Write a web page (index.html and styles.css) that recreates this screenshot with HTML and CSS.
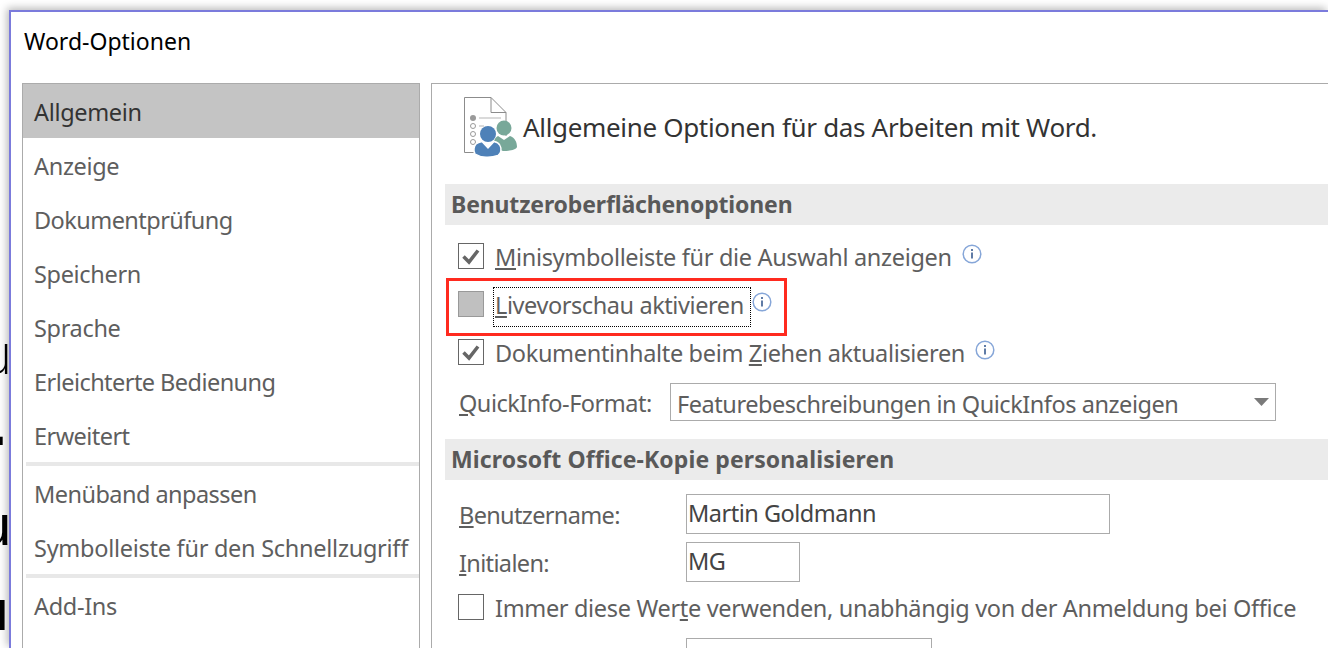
FILE: index.html
```html
<!DOCTYPE html>
<html lang="de">
<head>
<meta charset="utf-8">
<title>Word-Optionen</title>
<link rel="stylesheet" href="styles.css">
</head>
<body>
<div class="backdrop" aria-hidden="true">
  <span class="frag frag-1">u</span>
  <span class="frag frag-2">.</span>
  <span class="frag frag-3">u</span>
  <span class="frag frag-4">ı</span>
</div>
<div class="window">
  <header class="title">Word-Optionen</header>
  <div class="columns">
    <nav class="sidebar">
      <div class="nav-item selected">Allgemein</div>
      <div class="nav-item">Anzeige</div>
      <div class="nav-item narrow">Dokumentprüfung</div>
      <div class="nav-item">Speichern</div>
      <div class="nav-item">Sprache</div>
      <div class="nav-item narrow">Erleichterte Bedienung</div>
      <div class="nav-item narrow">Erweitert</div>
      <div class="nav-sep"></div>
      <div class="nav-item narrow">Menüband anpassen</div>
      <div class="nav-item roomy">Symbolleiste für den Schnellzugriff</div>
      <div class="nav-sep"></div>
      <div class="nav-item">Add-Ins</div>
    </nav>
    <main class="panel">
      <div class="heading">
        <svg class="heading-icon" width="60" height="64" viewBox="0 0 60 64">
          <path d="M1.500 1.500H28L43 16.500V40M1.500 1.500V56.500H12" fill="#fff" stroke="#8c8c8c" stroke-width="1"/>
          <path d="M28 1.500V16.500H43" fill="none" stroke="#8c8c8c" stroke-width="1"/>
          <circle cx="10" cy="22" r="3" fill="#9a9a9a"/>
          <path d="M16 22H38" stroke="#b5b5b5" stroke-width="1"/>
          <circle cx="10" cy="30" r="2.500" fill="#fff" stroke="#9a9a9a"/>
          <path d="M16 30H21" stroke="#b5b5b5" stroke-width="1"/>
          <circle cx="10" cy="38" r="2.500" fill="#fff" stroke="#9a9a9a"/>
          <circle cx="10" cy="46" r="2.500" fill="#fff" stroke="#9a9a9a"/>
          <circle cx="41" cy="32" r="7.500" fill="#78a899"/>
          <path d="M32 52C30 46 31 42 35 40L41 44L47 40C52 42 54 46 54 51C53 54 46 55 40 55Z" fill="#78a899"/>
          <circle cx="25" cy="38" r="8" fill="#4e81b8"/>
          <path d="M12 58C10 55 11 50 13 48C15 46.500 17 46 19 45.500L25 52L31 45.500C34 46 36 47.500 37 49.500C39 53 38 58 35 59.500C28 62 18 62 12 58Z" fill="#4e81b8" stroke="#fff" stroke-width="1.500"/>
        </svg>
        <h1 class="heading-text">Allgemeine Optionen für das Arbeiten mit Word.</h1>
      </div>

      <h2 class="section sec-a">Benutzeroberflächenoptionen</h2>
      <div class="check-row first">
        <span class="box"><svg width="24" height="24" viewBox="0 0 24 24"><path d="M4.500 12.500L10 18L19 6.500" fill="none" stroke="#666" stroke-width="3.500"/></svg></span>
        <span class="label"><u>M</u>inisymbolleiste für die Auswahl anzeigen</span>
        <svg class="info" width="20" height="20" viewBox="0 0 20 20"><circle cx="10" cy="10" r="8.800" fill="none" stroke="#86a6d8" stroke-width="1.500"/><rect x="9" y="8.500" width="2" height="6" fill="#5f7ba6"/><rect x="9" y="5" width="2" height="2" fill="#5f7ba6"/></svg>
      </div>
      <div class="check-row">
        <span class="box filled"></span>
        <span class="label focused"><u>L</u>ivevorschau aktivieren</span>
        <svg class="info tight" width="20" height="20" viewBox="0 0 20 20"><circle cx="10" cy="10" r="8.800" fill="none" stroke="#86a6d8" stroke-width="1.500"/><rect x="9" y="8.500" width="2" height="6" fill="#5f7ba6"/><rect x="9" y="5" width="2" height="2" fill="#5f7ba6"/></svg>
        <div class="callout"></div>
      </div>
      <div class="check-row">
        <span class="box"><svg width="24" height="24" viewBox="0 0 24 24"><path d="M4.500 12.500L10 18L19 6.500" fill="none" stroke="#666" stroke-width="3.500"/></svg></span>
        <span class="label">Dokumentinhalte beim <u>Z</u>iehen aktualisieren</span>
        <svg class="info" width="20" height="20" viewBox="0 0 20 20"><circle cx="10" cy="10" r="8.800" fill="none" stroke="#86a6d8" stroke-width="1.500"/><rect x="9" y="8.500" width="2" height="6" fill="#5f7ba6"/><rect x="9" y="5" width="2" height="2" fill="#5f7ba6"/></svg>
      </div>
      <div class="select-row">
        <span class="field-label"><u>Q</u>uickInfo-Format:</span>
        <div class="select">
          <span class="select-text">Featurebeschreibungen in QuickInfos anzeigen</span>
          <svg width="15" height="8" viewBox="0 0 15 8"><path d="M0 0H15L7.500 8Z" fill="#7a7a7a"/></svg>
        </div>
      </div>

      <h2 class="section sec-b">Microsoft Office-Kopie personalisieren</h2>
      <div class="input-row name">
        <span class="field-label wide"><u>B</u>enutzername:</span>
        <div class="input input-name">Martin Goldmann</div>
      </div>
      <div class="input-row initials">
        <span class="field-label wide"><u>I</u>nitialen:</span>
        <div class="input input-initials">MG</div>
      </div>
      <div class="check-row always">
        <span class="box"></span>
        <span class="label">Immer diese Wer<u>t</u>e verwenden, unabhängig von der Anmeldung bei Office</span>
      </div>
      <div class="input-row cut">
        <span class="field-label wide"></span>
        <div class="input input-cut"></div>
      </div>
    </main>
  </div>
</div>
</body>
</html>
```
FILE: styles.css
```css
* { box-sizing: border-box; }
html, body { margin: 0; height: 100%; overflow: hidden; background: #fff; }
body {
  padding: 10px 0 0 9px;
  font-family: "Noto Sans", "Open Sans", sans-serif;
  font-size: 23.500px;
  letter-spacing: -.33px;
  color: #5e5e5e;
}
.backdrop { position: absolute; left: 0; top: 0; width: 9px; height: 648px; overflow: hidden; }
.frag { position: absolute; color: #000; font-family: "Liberation Sans", sans-serif; font-size: 58px; line-height: 1; letter-spacing: 0; }
.frag-1 { left: -20px; top: 327px; font-family: "Inter", sans-serif; font-size: 55px; font-weight: 200; }
.frag-2 { left: -9px; top: 398px; font-size: 56px; font-weight: 700; }
.frag-3 { left: -21px; top: 496px; }
.frag-4 { left: -6px; top: 581px; }

.window {
  position: relative;
  height: 638px;
  border-top: 2px solid #7b7bdc;
  border-left: 2px solid #7b7bdc;
  background: #fff;
  box-shadow: -2px -2px 8px rgba(0, 0, 0, .28);
  overflow: hidden;
}
.title {
  height: 71px;
  padding: 13px 0 0 13px;
  font-size: 23px;
  letter-spacing: 0;
  line-height: 32px;
  color: #000;
}
.columns { display: flex; align-items: flex-start; padding-left: 11px; gap: 11px; }
.sidebar {
  width: 398px;
  height: 640px;
  flex: none;
  border: 1px solid #ababab;
}
.nav-item {
  height: 54px;
  padding: 2px 0 0 11px;
  line-height: 52px;
  white-space: nowrap;
}
.nav-item.narrow { letter-spacing: -.55px; }
.nav-item.roomy { letter-spacing: -.27px; }
.nav-item.selected { background: #c4c4c4; color: #333; }
.nav-sep { height: 4px; margin-left: 3px; background: #e8e8e8; }

.panel {
  flex: 1;
  height: 640px;
  border-top: 1px solid #ababab;
  border-left: 1px solid #ababab;
  padding-left: 13px;
}
.heading { display: flex; align-items: flex-start; height: 100px; padding: 12px 0 0 18px; }
.heading-icon { flex: none; }
.heading-text {
  margin: 13px 0 0;
  font-size: 26px;
  font-weight: 400;
  letter-spacing: -.33px;
  line-height: 36px;
  color: #333;
  white-space: nowrap;
}
.section {
  height: 41px;
  margin: 0;
  padding-left: 6px;
  background: #ebebeb;
  font-size: 23px;
  font-weight: 700;
  line-height: 41px;
  color: #595959;
  white-space: nowrap;
}
.sec-a { letter-spacing: -.15px; }
.sec-b { margin-top: 18px; letter-spacing: .1px; }

.check-row { position: relative; display: flex; align-items: center; height: 48px; padding-left: 13px; white-space: nowrap; }
.check-row.first { margin-top: 7px; }
.box { flex: none; width: 26px; height: 26px; border: 1px solid #666; background: #fff; }
.box svg { display: block; }
.box.filled { background: #c0c0c0; border-color: #999; }
.label { margin-left: 11px; line-height: 34px; padding-top: 2px; }
.focused { width: 258px; margin: 6px 0 0 9px; padding: 0 2px; height: 40px; line-height: 36px; letter-spacing: -.42px; outline: 1px dotted #000; outline-offset: -1px; }
.info { flex: none; margin: -4px 0 0 10px; }
.info.tight { margin-left: 1px; }
.callout { position: absolute; left: 1px; top: -2px; width: 341px; height: 58px; border: 3px solid #ff2a1f; pointer-events: none; }

.select-row { display: flex; align-items: center; height: 38px; margin-top: 7px; padding-left: 14px; }
.field-label { width: 211px; flex: none; white-space: nowrap; line-height: 38px; padding-top: 2px; letter-spacing: -.5px; }
.select {
  width: 606px;
  height: 38px;
  display: flex;
  align-items: center;
  justify-content: space-between;
  padding: 0 6px 0 6px;
  border: 1px solid #ababab;
  white-space: nowrap;
  line-height: 36px;
}
.select-text { letter-spacing: -.45px; padding-top: 3px; }
.input-row { display: flex; align-items: flex-start; padding-left: 14px; margin-top: 8px; }
.input-row.name { margin-top: 14px; }
.wide { width: 227px; line-height: 38px; padding-top: 2px; letter-spacing: -.65px; }
.input { height: 40px; padding-left: 1px; border: 1px solid #ababab; line-height: 36px; white-space: nowrap; color: #444; letter-spacing: -.5px; }
.input-name { width: 424px; }
.input-initials { width: 114px; }
.input-cut { width: 246px; }
.check-row.always { margin-top: 1px; }
.input-row.cut { margin-top: 0; padding-top: 7px; }
```
